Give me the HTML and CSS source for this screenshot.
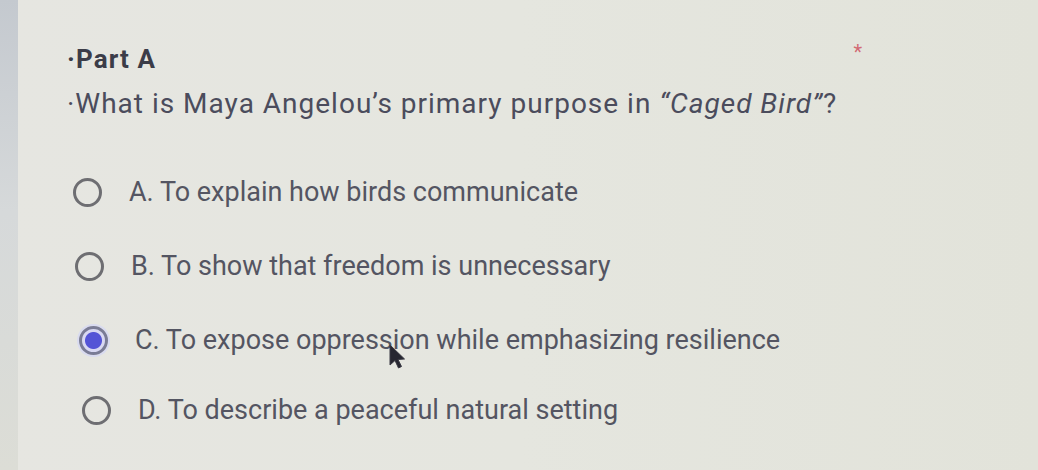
FILE: index.html
```html
<!DOCTYPE html>
<html>
<head>
<meta charset="utf-8">
<link rel="stylesheet" href="styles.css">
</head>
<body>
<div class="screen">
  <div class="edge"></div>
  <div class="card">
    <div class="head">
      <div class="title">·Part A</div>
      <div class="req">*</div>
    </div>
    <div class="question">·What is Maya Angelou’s primary purpose in <em>“Caged Bird”</em>?</div>
    <div class="options">
      <div class="opt o1"><span class="radio"></span><span class="label">A. To explain how birds communicate</span></div>
      <div class="opt o2"><span class="radio"></span><span class="label">B. To show that freedom is unnecessary</span></div>
      <div class="opt o3"><span class="radio on"></span><span class="label">C. To expose oppression while emphasizing resilience</span></div>
      <div class="opt o4"><span class="radio"></span><span class="label">D. To describe a peaceful natural setting</span></div>
    </div>
  </div>
  <svg class="cursor" width="20" height="28" viewBox="0 0 20 28"><path d="M2 1 L2 21 L7 16.5 L10.5 24 L13.5 22.5 L10 15.5 L16.5 15 Z" fill="#262630" stroke="#3a3a44" stroke-width="1"/></svg>
</div>
</body>
</html>
```

FILE: styles.css
```css
html, body { margin: 0; padding: 0; }
body {
  width: 1038px;
  height: 470px;
  overflow: hidden;
  background: #e4e4dd;
  font-family: Roboto, "Noto Sans", sans-serif;
}
.screen {
  position: relative;
  width: 1038px;
  height: 470px;
  display: flex;
  background: linear-gradient(90deg, #e6e6e1 0%, #e5e6df 50%, #e2e3da 100%);
}
.edge {
  width: 18px;
  flex: none;
  background: linear-gradient(180deg, #c4c9cf 0%, #d6d9da 45%, #dcddd6 100%);
}
.card {
  flex: 1;
  padding: 42px 0 0 49px;
}
.head {
  display: flex;
  align-items: flex-start;
  width: 795px;
  justify-content: space-between;
}
.title {
  font-size: 26px;
  font-weight: 700;
  letter-spacing: 1.1px;
  color: #3b3c48;
  line-height: 34px;
}
.req {
  color: #d26a74;
  font-size: 20px;
  line-height: 20px;
  margin-top: 0;
}
.question {
  font-size: 28px;
  letter-spacing: 1px;
  color: #4b4c5c;
  line-height: 34px;
  margin-top: 11px;
}
.question em { font-style: italic; }
.options {
  margin-top: 52px;
  display: flex;
  flex-direction: column;
  gap: 36px;
}
.opt {
  display: flex;
  align-items: center;
  gap: 27px;
  height: 38px;
  font-size: 27px;
  color: #545562;
}
.o1 { padding-left: 6px; }
.o2 { padding-left: 8px; }
.o3 { padding-left: 12px; }
.o4 { padding-left: 15px; margin-top: -4px; }
.radio {
  width: 23px;
  height: 23px;
  border: 3px solid #6e6e72;
  border-radius: 50%;
  flex: none;
  box-sizing: content-box;
}
.radio.on {
  border-color: #7a7c96;
  background: radial-gradient(circle, #5454d6 0 8px, #d8d8f2 9px 100%);
  box-shadow: 0 0 0 2px #d9dbf0;
}
.cursor {
  position: absolute;
  left: 388px;
  top: 344px;
}
```
